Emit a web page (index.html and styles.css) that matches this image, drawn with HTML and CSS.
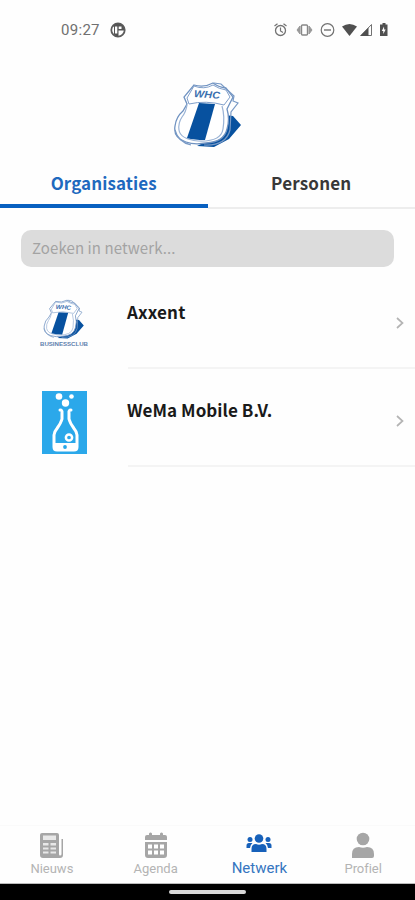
FILE: index.html
```html
<!DOCTYPE html>
<html lang="nl">
<head>
<meta charset="utf-8">
<meta name="viewport" content="width=device-width, initial-scale=1">
<title>Netwerk</title>
<link rel="stylesheet" href="styles.css">
</head>
<body>
<div class="app">
  <header class="status">
    <time class="clock">09:27</time>
    <svg class="app-dot" width="16" height="16" viewBox="0 0 16 16"><circle cx="8" cy="8" r="6.700" fill="#fff" stroke="#5c5c5c" stroke-width="1.800"/><path d="M3 4Q5 1 8 1.500Q13 2 14 6V8.500H8.500V14Q6 15 4 12.500V4.500H3Z" fill="#555"/><path d="M5 4.500H7.300V11.500H5ZM8.700 4.500H11.500V7H8.700Z" fill="#fff"/></svg>
    <svg class="system" width="116" height="16" viewBox="0 0 116 16" fill="none" stroke="#727272">
      <circle cx="6.500" cy="8.500" r="5" stroke-width="1.300"/><path d="M.5 4 3.500 1.700M9.500 1.700 12.500 4M6.500 5.500V9L9 10.500" stroke-width="1.200"/>
      <path d="M26 4 23 8 26 12ZM35 4 38 8 35 12Z" fill="#999" stroke="#999"/><rect x="27.500" y="3" width="6" height="10" rx="1" stroke="#888" stroke-width="1.400"/>
      <circle cx="53.500" cy="8" r="6.300" stroke-width="1.200"/><path d="M50 8H57" stroke-width="1.400"/>
      <path d="M68 4.500Q75.500-.5 83 4.500L75.500 14Z" fill="#505050" stroke="none"/>
      <path d="M87 13.500 97.500 2.500V13.500Z" stroke-width="1"/><path d="M86 14 94.500 5.500V14Z" fill="#505050" stroke="none"/>
      <path d="M113.500 2.500H111.500V1H108.500V2.500H106V14H113.500Z" fill="#505050" stroke="none"/><path d="M110 4.500 107.800 9H109.300V12L111.700 7.500H110.200Z" fill="#fff" stroke="none"/>
    </svg>
  </header>
  <div class="brand">
    <svg width="69" height="68" viewBox="0 0 69 68">
      <g id="shield">
        <path d="M52 34 60 35 68 44 56 58 41 66 24 65 48 53Z" fill="#07519f"/>
        <path d="M21 4Q31 7 40 2Q45 6 53 7L60 16 54 28Q57 38 54 48Q51 61 33 62Q21 64 13 61Q0 57 2 45Q3 36 10 30L14 23 11 16Z" fill="#fff" stroke="#6f92c1" stroke-width="1.300"/>
        <path d="M41 2 48 3 61 15 60 20 65 22 58 31 57 49Q53 65 31 64M2 49Q5 61 18 64" fill="none" stroke="#7899c5" stroke-width="1.200"/>
        <path d="M14 24Q13 31 9 36Q5 42 6 49Q7 58 25 60Q48 61 50 48Q52 35 49 25" fill="none" stroke="#9ab3d5" stroke-width="1.200"/>
        <path d="M26 22 42 23 32 59Q21 59 14 57Z" fill="#07519f"/>
        <path d="M14 17 21 5Q31 9 40 4Q46 8 53 9L57 16 51 24Q33 19 16 23Z" fill="#fff" stroke="#809fca" stroke-width="1"/>
        <text x="21" y="17" class="crest" textLength="26" lengthAdjust="spacingAndGlyphs" transform="rotate(4 34 14)">WHC</text>
      </g>
    </svg>
  </div>
  <nav class="tabs"><a class="tab active"><span>Organisaties</span></a><a class="tab"><span>Personen</span></a></nav>
  <div class="search">Zoeken in netwerk...</div>
  <main class="list">
    <article class="row">
      <div class="thumb"><svg width="50" height="49" viewBox="0 0 50 49"><use href="#shield" transform="translate(4 0) scale(.6)"/><text x="1" y="47" class="club" textLength="48" lengthAdjust="spacingAndGlyphs">BUSINESSCLUB</text></svg></div>
      <div class="info"><h2 class="axxent">Axxent</h2><svg class="chevron" width="8" height="12" viewBox="0 0 8 12"><path d="M1 1 6.500 6 1 11"/></svg></div>
    </article>
    <article class="row">
      <div class="thumb flask"><svg width="45" height="63" viewBox="0 0 45 63"><path fill="#2ba8ea" d="M0 0H45V63H0Z"/><g fill="#fff"><circle cx="17" cy="5.500" r="3.300"/><circle cx="29.500" cy="5.500" r="2.300"/><circle cx="23.500" cy="12" r="3.700"/></g><path d="M18 19Q20.500 19 20 22V28Q19 32 15 37.500Q12 41 12 44V56Q12 59 15 59H32Q35 59 35 56V44Q35 41 32 37.500Q28 32 27 28V22Q26.500 19 29 19" fill="none" stroke="#fff" stroke-width="3" stroke-linecap="round"/><path fill="#fff" d="M11 52H36V57Q35 60 32 60H15Q12 60 11 57Z"/><circle cx="23" cy="56" r="1.900" fill="#27a7e9"/><circle cx="27" cy="46.500" r="3.100" fill="none" stroke="#fff" stroke-width="2.500"/></svg></div>
      <div class="info"><h2 class="wema">WeMa Mobile B.V.</h2><svg class="chevron" width="8" height="12" viewBox="0 0 8 12"><path d="M1 1 6.500 6 1 11"/></svg></div>
    </article>
  </main>
  <nav class="bottom">
    <a class="item"><svg width="26" height="26" viewBox="0 0 26 26"><path d="M3 1H18Q20 1 20 3V22Q20 23.500 21 23.500Q22.500 23.500 22.500 22V7H24V23Q24 26 21 26H4Q1 26 1 23V3Q1 1 3 1Z" fill="#a6a6a6"/><path d="M4 3.500H17V8H4ZM4 11H9.500V13.500H4ZM11.500 11H17V13.500H11.500ZM4 15.500H9.500V17.500H4ZM11.500 15.500H17V17.500H11.500ZM4 19.500H9.500V21.500H4ZM11.500 19.500H17V21.500H11.500Z" fill="#e8e8e8"/></svg><span>Nieuws</span></a>
    <a class="item"><svg width="26" height="26" viewBox="0 0 26 26"><path d="M4 3H6V1.500Q7.500-.5 9 1.500V3H17V1.500Q18.500-.5 20 1.500V3H22Q24 3 24 5V8H2V5Q2 3 4 3ZM2 10H24V23Q24 26 21 26H5Q2 26 2 23Z" fill="#a6a6a6"/><path d="M5 12.500H9V16.500H5ZM11 12.500H15V16.500H11ZM17 12.500H21V16.500H17ZM5 18.500H9V22.500H5ZM11 18.500H15V22.500H11ZM17 18.500H21V22.500H17Z" fill="#fff"/></svg><span>Agenda</span></a>
    <a class="item current"><svg width="26" height="26" viewBox="0 0 26 26" fill="#1761ba"><circle cx="13" cy="6.500" r="4.300"/><circle cx="4" cy="7.500" r="2.500"/><circle cx="22" cy="7.500" r="2.500"/><path d="M5.500 20V17Q5.500 12 10 12Q13 13.300 16 12Q20.500 12 20.500 17V20ZM.5 16V13.500Q.5 11 3 11H6.500Q4.500 12.500 4 16ZM22 16Q21.500 12.500 19.500 11H23Q25.500 11 25.500 13.500V16Z"/></svg><span>Netwerk</span></a>
    <a class="item"><svg width="26" height="26" viewBox="0 0 26 26" fill="#a6a6a6"><circle cx="13" cy="7" r="6.300"/><path d="M2 26V22Q2 15 9 15Q13 16.500 17 15Q24 15 24 22V24Q24 26 22 26Z"/></svg><span class="profiel">Profiel</span></a>
  </nav>
  <footer class="gesture"><i></i></footer>
</div>
</body>
</html>
```
FILE: styles.css
```css
* { box-sizing: border-box; }
body { margin: 0; background: #fff; font-family: "Noto Sans CJK SC", sans-serif; }
.app { width: 415px; height: 900px; display: flex; flex-direction: column; overflow: hidden; background: #fefefe; }
.status { height: 60px; display: flex; align-items: center; padding: 0 25px 0 61px; }
.clock { width: 40px; font: 15px/20px Roboto, sans-serif; color: #707070; letter-spacing: .3px; white-space: nowrap; }
.app-dot { margin-left: 9px; }
.system { margin-left: auto; }
.brand { height: 103px; padding: 21px 0 0 173px; }
.brand svg { display: block; }
.crest { font: italic bold 10px "Liberation Sans", sans-serif; fill: #3b70af; }
.club { font: bold 6px "Liberation Sans", sans-serif; fill: #6080ad; }
.tabs { display: flex; height: 46px; }
.tab { flex: 1; display: flex; justify-content: center; border-bottom: 2px solid #ededed; font-weight: 700; font-size: 17px; line-height: 40px; letter-spacing: .2px; color: #383838; }
.tab.active { color: #1f69be; border-bottom: 4px solid #0860c0; height: 45px; letter-spacing: .1px; }
.search { flex: none; width: 373px; height: 37px; margin: 21px 0 0 21px; border-radius: 10px; background: #dcdcdc; color: #a3a3a3; padding-left: 11px; font-size: 15px; line-height: 36px; letter-spacing: .1px; }
.list { flex: 1; padding-top: 4px; }
.row { display: flex; height: 98px; }
.thumb { width: 128px; display: flex; justify-content: center; align-items: center; padding-bottom: 1px; padding-top: 7px; }
.thumb.flask { padding-top: 10px; }
.info { flex: 1; border-bottom: 2px solid #f4f4f4; display: flex; justify-content: space-between; padding: 27px 11px 0 0; }
.info h2 { margin: 0 0 0 -1px; font-size: 17px; line-height: 28px; font-weight: 700; color: #1a1a1a; letter-spacing: .2px; }
.info .wema { letter-spacing: .05px; }
.chevron { margin-top: 19px; fill: none; stroke: #b4b4b4; stroke-width: 1.7; }
.bottom { height: 59px; display: flex; border-top: 1px solid #fafafa; border-bottom: 1px solid #bbb; }
.item { flex: 1; display: flex; flex-direction: column; align-items: center; padding-top: 6px; font: 13px/16px Roboto, sans-serif; color: #b4b4b4; }
.item svg { flex: none; }
.item span { margin-top: 3px; }
.item .profiel { letter-spacing: -.05px; }
.current { color: #3575c0; font-size: 15px; }
.current span { margin-top: 2px; }
.gesture { height: 16px; background: #000; display: flex; justify-content: center; align-items: center; }
.gesture i { width: 77px; height: 4px; border-radius: 2px; background: #d8d8d8; }
```
